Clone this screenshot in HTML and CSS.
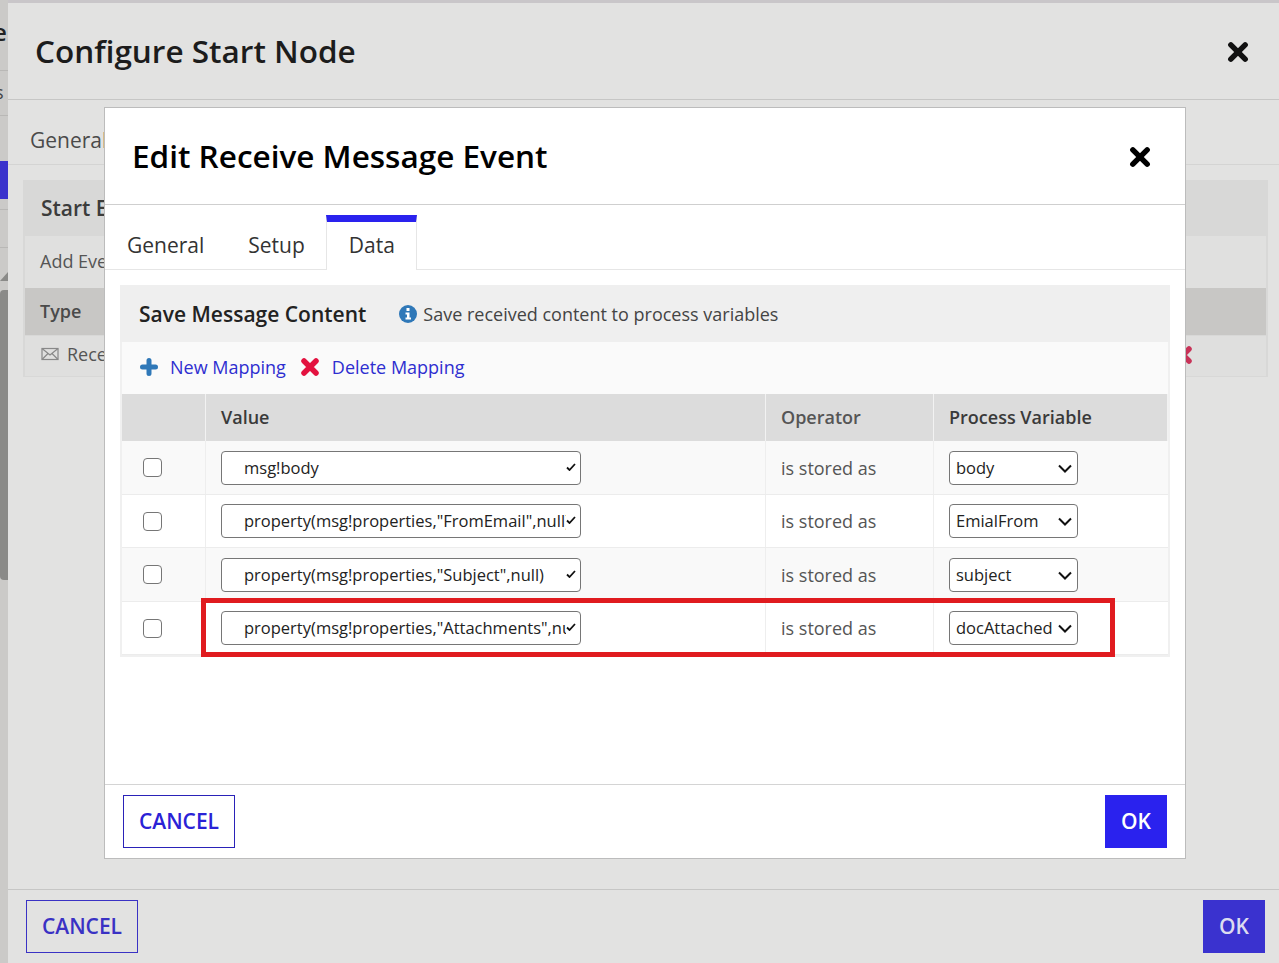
FILE: index.html
```html
<!DOCTYPE html>
<html lang="en">
<head>
    <meta charset="UTF-8">
    <meta name="viewport" content="width=device-width, initial-scale=1.0">
    <title>Edit Receive Message Event</title>
    <link rel="stylesheet" href="styles.css">
</head>
<body>
    <!-- page behind the dialogs -->
    <div class="page-strip">
        <span class="strip-e">e</span>
        <span class="strip-s">s</span>
        <div class="strip-line l1"></div>
        <div class="strip-line l2"></div>
        <div class="strip-blue"></div>
        <div class="strip-line l3"></div>
        <div class="strip-line l4"></div>
        <div class="strip-arrow"></div>
        <div class="strip-scroll"></div>
    </div>

    <!-- outer dialog -->
    <div class="dialog-back">
        <div class="back-head">
            <h2>Configure Start Node</h2>
            <svg class="close" viewBox="0 0 20 20"><path d="M3.500 3.500 16.500 16.500M16.500 3.500 3.500 16.500"/></svg>
        </div>
        <div class="back-tabs">General</div>
        <div class="back-main">
            <div class="back-panel">
                <div class="back-panel-title">Start Event</div>
                <div class="back-row add">Add Event</div>
                <div class="back-row type">Type</div>
                <div class="back-row rece">
                    <svg class="mail" viewBox="0 0 18 14"><rect x="1" y="1.500" width="16" height="11"/><path d="M1 1.500 9 8l8-6.500M1 12.500 7 6.500M17 12.500 11 6.500"/></svg>
                    Receive
                    <svg class="back-x" viewBox="0 0 20 20"><path d="M4 4 16 16M16 4 4 16"/></svg>
                </div>
            </div>
        </div>
        <div class="back-foot">
            <button class="btn btn-cancel">CANCEL</button>
            <button class="btn btn-ok">OK</button>
        </div>
    </div>

    <!-- inner dialog -->
    <div class="dialog">
        <div class="dialog-head">
            <h2>Edit Receive Message Event</h2>
            <svg class="close" viewBox="0 0 20 20"><path d="M3.500 3.500 16.500 16.500M16.500 3.500 3.500 16.500"/></svg>
        </div>
        <div class="tabs">
            <div class="tab">General</div>
            <div class="tab">Setup</div>
            <div class="tab active">Data</div>
            <div class="tabs-rest"></div>
        </div>
        <div class="dialog-body">
            <div class="section">
                <div class="section-head">
                    <h3>Save Message Content</h3>
                    <svg class="info" viewBox="0 0 18 18"><circle cx="9" cy="9" r="9"/><rect class="info-i" x="7.500" y="3" width="3" height="3"/><path class="info-i" d="M6.500 7.500H10.500V12.500H12V14.500H6.500V12.500H8V9.500H6.500Z"/></svg>
                    <span class="section-note">Save received content to process variables</span>
                </div>
                <div class="toolbar">
                    <svg class="tool-icon" viewBox="0 0 20 20"><path class="plus" d="M10 3.500V16.500M3.500 10H16.500"/></svg>
                    <a class="tool-link">New Mapping</a>
                    <svg class="tool-icon del" viewBox="0 0 20 20"><path class="cross" d="M4 4 16 16M16 4 4 16"/></svg>
                    <a class="tool-link del-link">Delete Mapping</a>
                </div>
                <div class="map-table">
                    <div class="map-row map-head">
                        <div class="cell c-check"></div>
                        <div class="cell c-value">Value</div>
                        <div class="cell c-op">Operator</div>
                        <div class="cell c-var">Process Variable</div>
                    </div>
                    <div class="map-row alt">
                        <div class="cell c-check"><input type="checkbox"></div>
                        <div class="cell c-value"><div class="combo"><span>msg!body</span><svg viewBox="0 0 10 8"><path d="M1 4.500 3.500 7 9 1"/></svg></div></div>
                        <div class="cell c-op">is stored as</div>
                        <div class="cell c-var"><select><option>body</option></select></div>
                    </div>
                    <div class="map-row">
                        <div class="cell c-check"><input type="checkbox"></div>
                        <div class="cell c-value"><div class="combo"><span>property(msg!properties,"FromEmail",null)</span><svg viewBox="0 0 10 8"><path d="M1 4.500 3.500 7 9 1"/></svg></div></div>
                        <div class="cell c-op">is stored as</div>
                        <div class="cell c-var"><select><option>EmialFrom</option></select></div>
                    </div>
                    <div class="map-row alt">
                        <div class="cell c-check"><input type="checkbox"></div>
                        <div class="cell c-value"><div class="combo"><span>property(msg!properties,"Subject",null)</span><svg viewBox="0 0 10 8"><path d="M1 4.500 3.500 7 9 1"/></svg></div></div>
                        <div class="cell c-op">is stored as</div>
                        <div class="cell c-var"><select><option>subject</option></select></div>
                    </div>
                    <div class="map-row">
                        <div class="cell c-check"><input type="checkbox"></div>
                        <div class="cell c-value"><div class="combo"><span>property(msg!properties,"Attachments",null)</span><svg viewBox="0 0 10 8"><path d="M1 4.500 3.500 7 9 1"/></svg></div></div>
                        <div class="cell c-op">is stored as</div>
                        <div class="cell c-var"><select><option>docAttached</option></select></div>
                    </div>
                </div>
            </div>
        </div>
        <div class="dialog-foot">
            <button class="btn btn-cancel">CANCEL</button>
            <button class="btn btn-ok">OK</button>
        </div>
    </div>

    <!-- red annotation -->
    <div class="highlight"></div>
</body>
</html>
```

FILE: styles.css
```css
* {
    box-sizing: border-box;
}
html, body {
    height: 100%;
}
body {
    margin: 0;
    height: 963px;
    overflow: hidden;
    background: #c9c6c9;
    font-family: "Open Sans", Arial, sans-serif;
    color: #333;
}
h2, h3 {
    margin: 0;
}

/* behind everything */
.page-strip {
    position: absolute;
    left: 0;
    top: 0;
    width: 8px;
    height: 963px;
    overflow: hidden;
    font-size: 24px;
    color: #222;
    background: #cbcac8;
}
.strip-e {
    position: absolute;
    left: -7px;
    top: 15px;
    font-weight: 600;
}
.strip-s {
    position: absolute;
    left: -5px;
    top: 80px;
    font-size: 18px;
    color: #444;
}
.strip-line {
    position: absolute;
    left: 0;
    width: 8px;
    height: 1px;
    background: #b9b8b6;
}
.l1 { top: 70px; }
.l2 { top: 115px; }
.l3 { top: 209px; }
.l4 { top: 247px; }
.strip-blue {
    position: absolute;
    left: 0;
    top: 161px;
    width: 8px;
    height: 38px;
    background: #3a32cc;
}
.strip-arrow {
    position: absolute;
    left: 0;
    top: 272px;
    border-left: 8px solid transparent;
    border-bottom: 9px solid #8a8a88;
}
.strip-scroll {
    position: absolute;
    left: 0;
    top: 290px;
    width: 8px;
    height: 290px;
    background: #8a8a88;
    border-radius: 4px 0 0 4px;
}

/* outer dialog */
.dialog-back {
    position: absolute;
    left: 8px;
    top: 3px;
    right: 0;
    bottom: 0;
    display: flex;
    flex-direction: column;
    background: #e2e2e1;
}
.back-head {
    height: 97px;
    flex: none;
    display: flex;
    align-items: center;
    justify-content: space-between;
    padding: 1px 30px 0 27px;
    border-bottom: 1px solid #c6c6c5;
}
.back-head h2 {
    margin-bottom: 2px;
    font-size: 31.500px;
    font-weight: 600;
    color: #1c1c1c;
}
.close {
    width: 22px;
    height: 22px;
    fill: none;
    stroke: #111;
    stroke-width: 5;
    stroke-linecap: round;
}
.back-tabs {
    height: 65px;
    flex: none;
    padding: 26px 0 0 22px;
    font-size: 21px;
    color: #4a4a4a;
    border-bottom: 1px solid #d4d4d3;
}
.back-main {
    flex: 1;
    padding: 15px 11px 0 15px;
}
.back-panel {
    height: 197px;
    background: #d8d8d7;
    padding: 0 2px 2px;
}
.back-panel-title {
    height: 56px;
    padding: 14px 0 0 16px;
    font-size: 21px;
    font-weight: 600;
    color: #3c3c3c;
}
.back-row {
    padding-left: 15px;
    font-size: 18px;
    color: #555;
}
.back-row.add {
    height: 52px;
    padding-top: 13px;
    background: #e0e0df;
}
.back-row.type {
    height: 47px;
    padding-top: 11px;
    background: #c8c7c5;
    font-weight: 600;
    color: #4a4a4a;
}
.back-row.rece {
    height: 40px;
    display: flex;
    align-items: center;
    gap: 8px;
    padding: 0 0 5px 16px;
    margin-top: 1px;
    background: #dfdfde;
    position: relative;
}
.mail {
    width: 18px;
    height: 14px;
    fill: none;
    stroke: #888;
    stroke-width: 1.200;
}
.back-x {
    position: absolute;
    left: 1148px;
    top: 9px;
    width: 20px;
    height: 20px;
    fill: none;
    stroke: #c83358;
    stroke-width: 5.500;
    stroke-linecap: round;
}
.back-foot {
    height: 74px;
    flex: none;
    display: flex;
    justify-content: space-between;
    align-items: flex-start;
    padding: 10px 14px 0 18px;
    border-top: 1px solid #c6c6c5;
}
.back-foot .btn-cancel {
    background: transparent;
    border-color: #3a32c4;
    color: #3a32c4;
}
.back-foot .btn-ok {
    background: #3a32cf;
    border-color: #3a32cf;
    color: #dcdcf0;
}

/* buttons */
.btn {
    height: 53px;
    padding: 0 0 2px;
    font-family: inherit;
    font-size: 21px;
    font-weight: 600;
    cursor: pointer;
    border-radius: 0;
}
.btn-cancel {
    width: 112px;
    background: #fff;
    color: #2a22d6;
    border: 1px solid #2a22b8;
}
.btn-ok {
    width: 62px;
    background: #2a22ee;
    color: #fff;
    border: 1px solid #2a22ee;
}

/* inner dialog */
.dialog {
    position: absolute;
    left: 104px;
    top: 107px;
    width: 1082px;
    height: 752px;
    display: flex;
    flex-direction: column;
    background: #fff;
    border: 1px solid #bcbcbc;
}
.dialog-head {
    height: 97px;
    flex: none;
    display: flex;
    align-items: center;
    justify-content: space-between;
    padding: 1px 34px 0 27px;
    border-bottom: 1px solid #cfcfcf;
}
.dialog-head h2 {
    margin-bottom: 2px;
    font-size: 31.500px;
    font-weight: 600;
    color: #000;
}
.dialog-head .close {
    stroke: #000;
}
.tabs {
    height: 65px;
    flex: none;
    display: flex;
    align-items: flex-end;
}
.tab {
    height: 55px;
    padding: 16px 22px 0;
    font-size: 21px;
    color: #333;
    border-bottom: 1px solid #e6e6e6;
}
.tab.active {
    width: 91px;
    padding: 9px 0 0 1px;
    margin-left: -1px;
    border-top: 7px solid #2a22ee;
    border-left: 1px solid #e6e6e6;
    border-right: 1px solid #e6e6e6;
    border-bottom: 0;
    text-align: center;
}
.tabs-rest {
    flex: 1;
    border-bottom: 1px solid #e6e6e6;
}
.dialog-body {
    flex: 1;
    padding: 15px 15px 0;
}
.section {
    width: 1050px;
    padding-bottom: 2px;
    background: #f0f0f0;
}
.section-head {
    height: 57px;
    display: flex;
    align-items: center;
    padding-left: 19px;
    background: #efefef;
}
.section-head h3 {
    font-size: 21px;
    font-weight: 600;
    color: #222;
}
.info {
    width: 18px;
    height: 18px;
    margin-left: 33px;
    fill: #2f78b8;
}
.info-i {
    fill: #fff;
}
.section-note {
    margin-left: 6px;
    font-size: 18px;
    color: #444;
}
.toolbar {
    height: 52px;
    margin: 0 2px;
    display: flex;
    align-items: center;
    padding: 0 0 2px 17px;
    background: #fafafa;
}
.tool-icon {
    width: 20px;
    height: 20px;
    fill: none;
}
.tool-icon.del {
    margin-left: 14px;
}
.plus {
    stroke: #2f78b8;
    stroke-width: 5;
    stroke-linecap: round;
}
.cross {
    stroke: #e3123f;
    stroke-width: 5.500;
    stroke-linecap: round;
}
.tool-link {
    margin-left: 11px;
    font-size: 18px;
    color: #2e2ed0;
    cursor: pointer;
}
.tool-link.del-link {
    margin-left: 12px;
}
.map-table {
    margin: 0 2px;
}
.map-row {
    display: flex;
    height: 53px;
    border-bottom: 1px solid #ececec;
    background: #fff;
}
.map-row.alt {
    height: 54px;
    background: #f9f9f9;
}
.map-row.alt .c-value,
.map-row.alt .c-var {
    padding-top: 1px;
}
.map-row.map-head {
    height: 47px;
    background: #dcdcdc;
    font-size: 18px;
    font-weight: 600;
    color: #3a3a3a;
    border-bottom: 0;
}
.map-row.map-head .cell {
    padding-bottom: 2px;
}
.cell {
    display: flex;
    align-items: center;
    padding-left: 15px;
    border-right: 1px solid #eee;
    font-size: 18px;
}
.map-head .cell {
    border-right: 1px solid #f2f2f2;
}
.c-check {
    width: 84px;
    padding-left: 21px;
}
.c-value {
    width: 560px;
}
.c-op {
    width: 168px;
    color: #555;
}
.c-var {
    flex: 1;
    border-right: 0;
}
input[type="checkbox"] {
    appearance: none;
    width: 19px;
    height: 19px;
    margin: 0;
    background: #fff;
    border: 1.500px solid #767676;
    border-radius: 4px;
}
.combo {
    width: 360px;
    height: 34px;
    display: flex;
    align-items: center;
    padding: 0 4px 2px 22px;
    background: #fff;
    border: 1px solid #767676;
    border-radius: 4px;
    font-size: 16.500px;
    color: #222;
}
.combo span {
    flex: 1;
    overflow: hidden;
    white-space: nowrap;
}
.combo svg {
    width: 10px;
    height: 8px;
    flex: none;
    fill: none;
    stroke: #111;
    stroke-width: 1.800;
}
select {
    appearance: none;
    width: 129px;
    height: 34px;
    padding: 0 6px 2px;
    background: #fff url("data:image/svg+xml,%3Csvg xmlns='http://www.w3.org/2000/svg' viewBox='0 0 14 9'%3E%3Cpath d='M1 1.500 7 7.500 13 1.500' fill='none' stroke='%23111' stroke-width='2'/%3E%3C/svg%3E") no-repeat right 5px center / 14px 9px;
    border: 1px solid #767676;
    border-radius: 4px;
    font-family: inherit;
    font-size: 16.500px;
    color: #222;
}
.dialog-foot {
    height: 74px;
    flex: none;
    display: flex;
    justify-content: space-between;
    align-items: flex-start;
    padding: 10px 18px 0;
    border-top: 1px solid #d4d4d4;
}

.highlight {
    position: absolute;
    left: 201px;
    top: 598px;
    width: 914px;
    height: 59px;
    border: 5px solid #e01b1f;
    pointer-events: none;
}
```
